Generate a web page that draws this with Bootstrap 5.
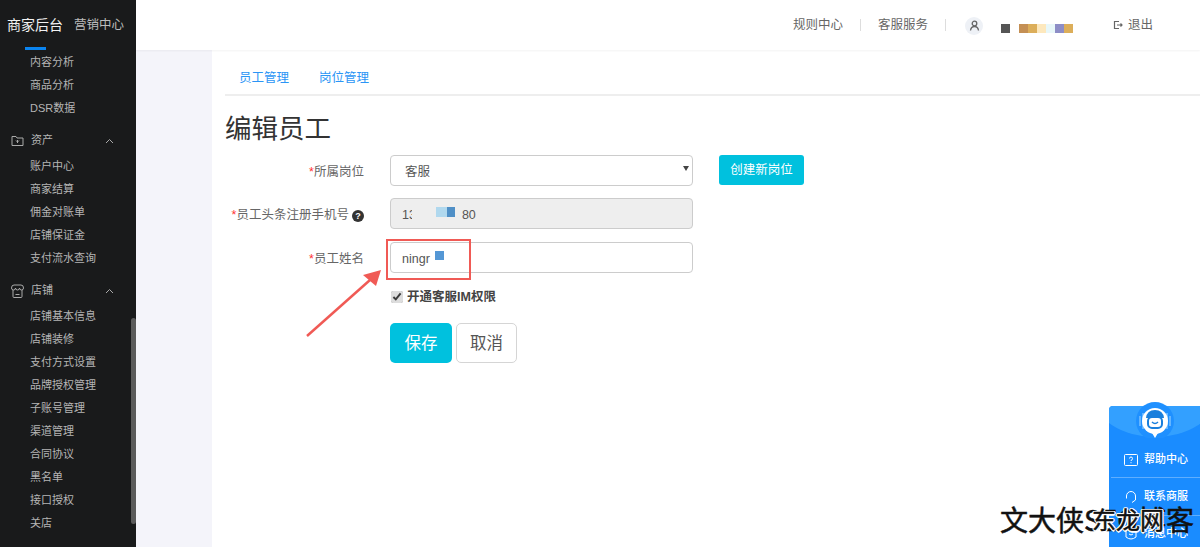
<!DOCTYPE html>
<html lang="zh"><head><meta charset="utf-8">
<link href="https://cdn.jsdelivr.net/npm/bootstrap@5.3.0/dist/css/bootstrap.min.css" rel="stylesheet">
<style>
html,body{height:547px;overflow:hidden}
body{font-family:"Liberation Sans","Noto Sans CJK SC",sans-serif;font-size:12.5px;color:#555;background:#fff}
.shell{height:547px}
.side{width:136px;background:#191a1b;color:#bbb;flex:none;height:547px;overflow:hidden;position:relative}
.brand{height:47px;padding:3px 0 0 7px;gap:11px;color:#fff}
.brand b{font-weight:400;font-size:14px;color:#f2f2f2}
.brand span{font-size:12.5px;color:#bdbdbd}
.brand-bar{width:21px;height:3px;background:#0a84f0;margin-left:25px;margin-bottom:1px}
.sub{padding-left:30px;height:23px;line-height:23px;font-size:11px;color:#b5b5b5}
.sgroup{height:23px;font-size:11px;padding-left:11px;gap:7px;color:#b5b5b5;margin-top:9px}
.sgroup .caret{margin-left:auto;margin-right:22px}
.subfirst{margin-top:3px}
.sthumb{position:absolute;left:131px;top:318px;width:5px;height:206px;background:#5b5b5b;border-radius:3px}
.work{flex:1;min-width:0}
.top{height:50px;background:#fff;box-shadow:0 1px 2px rgba(0,0,0,.05);position:relative;color:#666;font-size:12.5px}
.rule-a{margin-left:657px}
.tsep{width:1px;height:12px;background:#ddd;margin:0 17px}
.avatar{width:18px;height:18px;border-radius:50%;background:#eef1f6;margin:1px 0 0 2px}
.pxs{margin:6px 0 0 18px}
.px{height:9px;width:9px;display:block}
.px.gapL{margin-left:9px}
.px.c0{background:#555}.px.c1{background:#c48f54}.px.c2{background:#dcae5a}.px.c3{background:#fde8bd}.px.c4{background:#e8f7f9}.px.c5{background:#8d8dc6}
.logout{margin-left:40px;gap:5px}
.lower{height:497px}
.gutter{width:76px;background:#f4f4fa;flex:none}
.pane{flex:1;padding:0 0 0 13px;min-width:0}
.tabs{height:46px;border-bottom:2px solid #eee;padding:12px 0 0 14px;gap:30px}
.tabs a{color:#2b95f5;text-decoration:none;font-size:12.5px}
.ttl{font-size:26.5px;font-weight:400;color:#333;margin:16px 0 0;line-height:34px}
.frow{height:32px;margin-bottom:11px}
.frow.wide{margin-bottom:12px}
.first-row{margin-top:8px}
.flab{width:140px;text-align:right;color:#666;flex:none;padding:4px 1px 0 0;white-space:nowrap}
.flab i{color:#f33;font-style:normal}
.fctl{width:303px;height:31px;margin-left:25px;border:1px solid #ccc;border-radius:4px;background:#fff;padding:4px 11px 0;color:#555;flex:none;position:relative}
.fctl.ro{background:#eee}
.fctl.sel{padding-left:14px}
.arrow{position:absolute;right:3px;top:10px;width:0;height:0;border-left:3px solid transparent;border-right:3px solid transparent;border-top:5px solid #444}
.newbtn{background:#00c1de;color:#fff;border:0;border-radius:3px;width:85px;height:30px;font-size:12.5px;padding:0;margin-left:26px}
.qm{display:inline-block;width:12px;height:12px;border-radius:50%;background:#333;color:#fff;font-size:9px;line-height:12px;text-align:center;font-weight:700;margin-left:3px;vertical-align:0}
.patch13{width:4px;height:14px;background:#eee;margin:0 0 0 -4px}
.blk1{width:11px;height:10px;background:#b0d8ee;margin:-6px 0 0 20px}
.blk2{width:8px;height:10px;background:#4f8fc6;margin-top:-6px}
.tail80{margin-left:7px}
.namedot{width:9px;height:9px;background:#5497d5;margin:-7px 0 0 5px}
.chk{margin:17px 0 0 166px;height:14px;gap:4px;color:#444;font-weight:700}
.chk input{width:12px;height:12px;margin:0;accent-color:#ddd}
.chk span{font-size:12.5px}
.acts{margin:19px 0 0 165px;gap:4px}
.save,.cancel{width:62px;height:40px;font-size:16.5px;padding:0;border-radius:5px}
.save{background:#00c1de;color:#fff;border:0}
.cancel{background:#fff;color:#555;border:1px solid #d5d5d5;width:61px}
.redbox{position:absolute;left:386px;top:239px;width:85px;height:41px;border:2px solid #f05a55;pointer-events:none}
.arw{position:absolute;left:300px;top:262px}
.help{position:absolute;left:1109px;top:406px;width:91px;height:141px;background:#1a8cff;border-radius:4px 0 0 0;color:#fff;overflow:hidden}
.hcurve{position:absolute;left:-14px;top:-47px;width:120px;height:78px;background:#33a0ff;border-radius:50%}
.hitem{position:absolute;left:0;width:91px;height:20px;gap:6px;padding-left:15px;font-size:11px}
.h1{top:44px}.h2{top:81px}.h3{top:118px}
.hline{position:absolute;left:2px;right:0;height:1px;background:rgba(255,255,255,.3)}
.l1{top:71px}.l2{top:109px}
.hlogo{position:absolute;left:1135px;top:402px}
.wm{position:absolute;font-family:"Noto Sans CJK SC",sans-serif;line-height:1;white-space:nowrap;color:#111;-webkit-text-stroke:.5px #111}
.wm1{left:1000px;top:505px;font-size:28px}
.wm2{left:1092px;top:507px;font-size:24px;text-shadow:1.500px 0 #fff,-1.500px 0 #fff,0 1.500px #fff,0 -1.500px #fff,1px 1px #fff,-1px -1px #fff,1px -1px #fff,-1px 1px #fff}
</style></head><body>
<div class="d-flex shell">
<aside class="side">
 <div class="brand d-flex align-items-center"><b>商家后台</b><span>营销中心</span></div>
 <div class="brand-bar"></div>
 <div class="sub" >内容分析</div><div class="sub">商品分析</div><div class="sub">DSR数据</div>
 <div class="sgroup d-flex align-items-center">
  <svg width="13" height="13" viewBox="0 0 13 13" fill="none" stroke="#aaa"><path d="M1 2.500h4l1 1.500h6v7.500H1z"/><path d="M6.500 6v3M5 6.500l1.500 1.500L8 6.500"/></svg><span>资产</span>
  <svg class="caret" width="9" height="6" viewBox="0 0 9 6" fill="none" stroke="#aaa"><path d="M1 5l3.500-3.500L8 5"/></svg></div>
 <div class="sub subfirst">账户中心</div><div class="sub">商家结算</div><div class="sub">佣金对账单</div><div class="sub">店铺保证金</div><div class="sub">支付流水查询</div>
 <div class="sgroup d-flex align-items-center">
  <svg width="13" height="14" viewBox="0 0 13 14" fill="none" stroke="#aaa"><path d="M2 6v6.500a1 1 0 0 0 1 1h7a1 1 0 0 0 1-1V6"/><path d="M3 1h7q2.500 0 2.500 3a2 2 0 0 1-4 0 2 2 0 0 1-4 0 2 2 0 0 1-4 0Q.5 1 3 1zM4.500 10.500h4"/></svg><span>店铺</span>
  <svg class="caret" width="9" height="6" viewBox="0 0 9 6" fill="none" stroke="#aaa"><path d="M1 5l3.500-3.500L8 5"/></svg></div>
 <div class="sub subfirst">店铺基本信息</div><div class="sub">店铺装修</div><div class="sub">支付方式设置</div><div class="sub">品牌授权管理</div><div class="sub">子账号管理</div><div class="sub">渠道管理</div><div class="sub">合同协议</div><div class="sub">黑名单</div><div class="sub">接口授权</div><div class="sub">关店</div>
 <div class="sthumb"></div>
</aside>
<div class="work d-flex flex-column">
 <header class="top d-flex align-items-center">
  <span class="rule-a">规则中心</span><span class="tsep"></span><span>客服服务</span><span class="tsep"></span>
  <span class="avatar d-flex align-items-center justify-content-center"><svg width="11" height="11" viewBox="0 0 11 11" fill="none" stroke="#666" stroke-width="1.300"><circle cx="5.500" cy="3.500" r="2.300"/><path d="M1.500 10.500c.4-3 2-4 4-4s3.600 1 4 4"/></svg></span>
  <span class="pxs d-flex"><span class="px c0"></span><span class="px gapL c1"></span><span class="px c2"></span><span class="px c3"></span><span class="px c4"></span><span class="px c5"></span><span class="px c2"></span></span>
  <span class="logout d-flex align-items-center"><svg width="10" height="10" viewBox="0 0 10 10" fill="none" stroke="#666" stroke-width="1.200"><path d="M6 1.500H1.500v7H6M4 5h5M7.500 3.500L9 5 7.500 6.500"/></svg>退出</span>
 </header>
 <div class="lower d-flex">
  <div class="gutter"></div>
  <main class="pane">
   <nav class="tabs d-flex align-items-center"><a href="#">员工管理</a><a href="#">岗位管理</a></nav>
   <h1 class="ttl">编辑员工</h1>
   <div class="frow first-row d-flex align-items-center"><div class="flab"><i>*</i>所属岗位</div><div class="fctl sel d-flex align-items-center">客服<span class="arrow"></span></div><button class="newbtn btn">创建新岗位</button></div>
   <div class="frow wide d-flex align-items-center"><div class="flab"><i>*</i>员工头条注册手机号<span class="qm">?</span></div><div class="fctl ro d-flex align-items-center"><span>13</span><span class="patch13"></span><span class="blk1"></span><span class="blk2"></span><span class="tail80">80</span></div></div>
   <div class="frow d-flex align-items-center"><div class="flab"><i>*</i>员工姓名</div><div class="fctl d-flex align-items-center">ningr<span class="namedot"></span></div></div>
   <label class="chk d-flex align-items-center"><input type="checkbox" checked><span>开通客服IM权限</span></label>
   <div class="acts d-flex"><button class="save btn">保存</button><button class="cancel btn">取消</button></div>
  </main>
 </div>
</div>
</div>
<div class="redbox"></div>
<svg class="arw" width="90" height="80" viewBox="0 0 90 80"><path d="M7 74L70 18" stroke="#f05a55" stroke-width="2.500"/><path d="M81 8L63 13 76 24z" fill="#f05a55"/></svg>
<div class="help">
 <div class="hcurve"></div>
 <div class="hitem h1 d-flex align-items-center"><svg width="14" height="12" viewBox="0 0 14 12" fill="none" stroke="#fff"><rect x=".5" y=".5" width="13" height="11" rx="1"/><path d="M5.500 4.500q0-1.500 1.500-1.500t1.500 1.500T7 6.500V7M7 8.200v1"/></svg><span>帮助中心</span></div>
 <div class="hline l1"></div>
 <div class="hitem h2 d-flex align-items-center"><svg width="14" height="14" viewBox="0 0 14 14" fill="none" stroke="#fff"><path d="M2.500 8V6a4.500 4.500 0 0 1 9 0v2M11.500 8v2L8 12.500M2.500 6.500v2M11.500 6.500v2"/></svg><span>联系商服</span></div>
 <div class="hline l2"></div>
 <div class="hitem h3 d-flex align-items-center"><svg width="14" height="14" viewBox="0 0 14 14" fill="none" stroke="#fff"><path d="M2 4q5-3 10 0v6q-5 4-10 0zM5 7q2 2 4 0"/></svg><span>消息中心</span></div>
</div>
<svg class="hlogo" width="40" height="36" viewBox="0 0 40 36"><circle cx="20" cy="19" r="19" fill="#1f90ff"/><path d="M5 14v10M8 11v16M32 11v16M35 14v10" stroke="#7cc1ff" stroke-width="1.500"/><circle cx="20" cy="19" r="13" fill="#fff"/><path d="M20 36l-3-5h6z" fill="#fff"/><path d="M11 16q1-8 9-8t9 8z" fill="#1a7fdc"/><rect x="13" y="15" width="14" height="11" rx="4" fill="none" stroke="#1a7fdc" stroke-width="2"/><path d="M17 20q3 3 6 0" fill="none" stroke="#1a7fdc" stroke-width="1.500"/></svg>
<div class="wm wm1">文大侠SEO博客</div>
<div class="wm wm2">东龙网</div>
<script src="https://cdn.jsdelivr.net/npm/bootstrap@5.3.0/dist/js/bootstrap.bundle.min.js"></script>
</body></html>
